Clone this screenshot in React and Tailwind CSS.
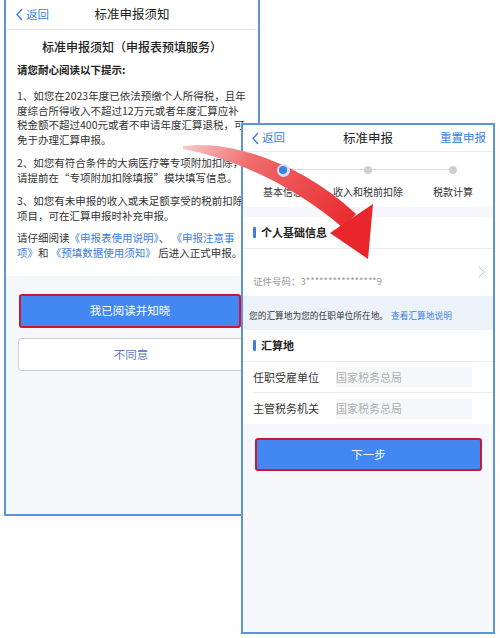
import React from 'react';

const BackLink = ({ className = '' }) => (
  <div className={`flex items-center text-[#3b7ddd] text-[11.5px] ${className}`}>
    <svg width="9" height="13" viewBox="0 0 9 13" className="mr-[2px]">
      <path d="M7 1 L2 6.5 L7 12" fill="none" stroke="#3b7ddd" strokeWidth="1.4" />
    </svg>
    返回
  </div>
);

const SectionTitle = ({ children }) => (
  <div className="h-[31px] flex items-center pl-[10px] text-[11px] font-bold text-[#222]">
    <span className="w-[3px] h-[11px] bg-[#3d7fe0] mr-[5px] rounded-[1px]" />
    {children}
  </div>
);

// left screen: notice before filing
const NoticeScreen = () => {
  const para = 'text-[10.5px] leading-[14.5px] text-[#333] whitespace-nowrap';
  const link = 'text-[#3b7ddd]';
  return (
    <div className="absolute left-[4px] top-0 w-[256px] h-[516px] border-2 border-t-0 border-[#5b95d8] bg-[#f5f7fa] flex flex-col">
      <div className="h-[30px] grid grid-cols-[1fr_auto_1fr] items-center bg-white border-b border-[#ececec]">
        <BackLink className="pl-[9px]" />
        <div className="text-[12.5px] text-[#222]">标准申报须知</div>
        <div />
      </div>
      <div className="bg-white h-[246px] pl-[11px] pt-[7px]">
        <div className="text-[12px] leading-[20px] font-medium text-[#222] text-center pr-[11px]">
          标准申报须知（申报表预填服务）
        </div>
        <div className="mt-[6px] text-[10.5px] leading-[14px] font-bold text-[#222]">请您耐心阅读以下提示:</div>
        <div className={`mt-[12px] ${para}`}>
          <div>1、如您在2023年度已依法预缴个人所得税，且年</div>
          <div>度综合所得收入不超过12万元或者年度汇算应补</div>
          <div>税金额不超过400元或者不申请年度汇算退税，可</div>
          <div>免于办理汇算申报。</div>
        </div>
        <div className={`mt-[9px] ${para}`}>
          <div>2、如您有符合条件的大病医疗等专项附加扣除，</div>
          <div>请提前在“专项附加扣除填报”模块填写信息。</div>
        </div>
        <div className={`mt-[9px] ${para}`}>
          <div>3、如您有未申报的收入或未足额享受的税前扣除</div>
          <div>项目，可在汇算申报时补充申报。</div>
        </div>
        <div className={`mt-[8px] ${para}`}>
          <div>
            请仔细阅读<span className={link}>《申报表使用说明》</span>、 <span className={link}>《申报注意事</span>
          </div>
          <div>
            <span className={link}>项》</span>和 <span className={link}>《预填数据使用须知》</span> 后进入正式申报。
          </div>
        </div>
      </div>
      <div className="px-[12px] pt-[18px] flex flex-col gap-[10px]">
        <button className="h-[34px] w-[222px] ml-[1px] rounded-[3px] border-2 border-[#cf1530] bg-[#4287f2] text-white text-[11.5px]">
          我已阅读并知晓
        </button>
        <button className="h-[33px] w-[226px] rounded-[4px] border border-[#c9ced6] bg-white text-[#5a7fb8] text-[11.5px]">
          不同意
        </button>
      </div>
    </div>
  );
};

const Step = ({ label, active }) => (
  <div className="flex flex-col items-center w-[84px]">
    <div className="h-[14px] flex items-center justify-center relative z-10">
      {active ? (
        <span className="w-[13px] h-[13px] rounded-full bg-[#cfe0fa] flex items-center justify-center">
          <span className="w-[8px] h-[8px] rounded-full bg-[#3d7fe0]" />
        </span>
      ) : (
        <span className="w-[8px] h-[8px] rounded-full bg-[#cfcfcf]" />
      )}
    </div>
    <div className="mt-[7px] text-[10px] text-[#333] whitespace-nowrap">{label}</div>
  </div>
);

const FieldRow = ({ label, value, last }) => (
  <div className={`h-[31px] ml-[10px] flex items-center ${last ? '' : 'border-b border-[#ececec]'}`}>
    <div className="w-[83px] text-[11px] text-[#333]">{label}</div>
    <div className="w-[136px] h-[20px] bg-[#f6f7f9] flex items-center text-[11px] text-[#b0b0b0]">{value}</div>
  </div>
);

// right screen: standard filing
const FilingScreen = () => (
  <div className="absolute left-[241px] top-[123px] w-[254px] h-[511px] border-2 border-[#5b95d8] bg-[#f5f7fa] flex flex-col">
    <div className="h-[27px] grid grid-cols-[1fr_auto_1fr] items-center bg-white border-b border-[#ececec]">
      <BackLink className="pl-[8px]" />
      <div className="text-[12.5px] text-[#222]">标准申报</div>
      <div className="text-right pr-[7px] text-[11.5px] text-[#3b7ddd]">重置申报</div>
    </div>
    <div className="bg-white h-[55px] pt-[11px] relative">
      <div className="absolute left-[40px] right-[41px] top-[17px] h-px bg-[#dcdcdc]" />
      <div className="flex justify-between ml-[-2px] mr-[-2px] relative">
        <Step label="基本信息" active />
        <Step label="收入和税前扣除" />
        <Step label="税款计算" />
      </div>
    </div>
    <div className="h-[10px]" />
    <div className="bg-white">
      <div className="border-b border-[#ececec]">
        <SectionTitle>个人基础信息</SectionTitle>
      </div>
      <div className="h-[47px] flex justify-between pl-[10px] pr-[8px]">
        <div className="pt-[25px] text-[9.5px] text-[#999]">证件号码：3****************9</div>
        <svg width="7" height="12" viewBox="0 0 7 12" className="mt-[17px]">
          <path d="M1 1 L6 6 L1 11" fill="none" stroke="#c4c4c4" strokeWidth="1" />
        </svg>
      </div>
    </div>
    <div className="h-[34px] bg-[#edf3fb] flex items-center pl-[6px] pt-[6px] text-[8.7px] text-[#333] whitespace-nowrap">
      您的汇算地为您的任职单位所在地。<span className="ml-[3px] text-[#3b7ddd]">查看汇算地说明</span>
    </div>
    <div className="bg-white">
      <div className="border-b border-[#ececec]">
        <SectionTitle>汇算地</SectionTitle>
      </div>
      <FieldRow label="任职受雇单位" value="国家税务总局" />
      <FieldRow label="主管税务机关" value="国家税务总局" last />
    </div>
    <div className="px-[12px] pt-[14px]">
      <button className="h-[33px] w-[227px] rounded-[3px] border-2 border-[#cf1530] bg-[#4287f2] text-white text-[11.5px]">
        下一步
      </button>
    </div>
  </div>
);

// curved red arrow between the two screens
const Arrow = () => (
  <svg className="absolute left-0 top-0 pointer-events-none" width="500" height="638" viewBox="0 0 500 638">
    <defs>
      <linearGradient id="arrowGrad" x1="183" y1="147" x2="350" y2="240" gradientUnits="userSpaceOnUse">
        <stop offset="0" stopColor="#f8c8c8" />
        <stop offset="0.35" stopColor="#f06a6a" />
        <stop offset="1" stopColor="#e8262c" />
      </linearGradient>
    </defs>
    <path
      d="M183 146 C230 140 300 162 356 214 L343 228 C292 184 232 158 183 149 Z"
      fill="url(#arrowGrad)"
    />
    <path d="M330 233 L373 204 L368 259 Z" fill="#e8262c" />
  </svg>
);

export default function App() {
  return (
    <div className="relative w-[500px] h-[638px] bg-white overflow-hidden font-['Noto_Sans_CJK_SC',sans-serif]">
      <NoticeScreen />
      <FilingScreen />
      <Arrow />
    </div>
  );
}
